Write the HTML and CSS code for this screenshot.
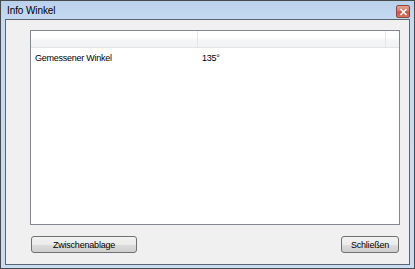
FILE: index.html
```html
<!DOCTYPE html>
<html>
<head>
<meta charset="utf-8">
<link rel="stylesheet" href="styles.css">
</head>
<body>
<div class="window">
  <div class="titlebar">
    <span class="title">Info Winkel</span>
    <div class="close"><svg width="9" height="8" viewBox="0 0 9 8"><path d="M1.5 1 L7.5 7 M7.5 1 L1.5 7" stroke="#fff" stroke-width="1.6"/></svg></div>
  </div>
  <div class="client">
    <div class="list">
      <div class="header">
        <div class="hcol c1"></div>
        <div class="hcol c2"></div>
        <div class="hcol fill"></div>
      </div>
      <div class="row">
        <div class="cell c1">Gemessener Winkel</div>
        <div class="cell c2">135°</div>
      </div>
    </div>
    <div class="buttons">
      <button class="btn wide">Zwischenablage</button>
      <button class="btn narrow">Schließen</button>
    </div>
  </div>
</div>
</body>
</html>
```

FILE: styles.css
```css
html, body {
  margin: 0;
  padding: 0;
  background: #ffffff;
}
body {
  font-family: "Liberation Sans", Arial, sans-serif;
}
.window {
  width: 415px;
  height: 269px;
  box-sizing: border-box;
  border: 1px solid #4a4a4a;
  background: linear-gradient(to bottom, #bad1ec 0px, #c6daf1 20px, #c9dcf2 100%);
  padding: 0 4px 3px 4px;
  display: flex;
  flex-direction: column;
}
.titlebar {
  height: 18px;
  display: flex;
  align-items: center;
  justify-content: space-between;
  flex: none;
}
.title {
  font-size: 10px;
  color: #000;
  padding-left: 2px;
  margin-top: 1px;
  letter-spacing: -0.1px;
}
.close {
  width: 14px;
  height: 13px;
  box-sizing: border-box;
  border: 1px solid #8a4a43;
  border-radius: 2px;
  background: linear-gradient(to bottom, #e4a493 0%, #d27a66 45%, #c4553f 55%, #d47560 100%);
  display: flex;
  align-items: center;
  justify-content: center;
  margin-top: 3px;
}
.client {
  flex: 1;
  border: 1px solid #5b6572;
  background: #f0f0f0;
  padding: 10px 9px 11px 24px;
  display: flex;
  flex-direction: column;
  gap: 11px;
}
.list {
  flex: 1;
  background: #fff;
  border: 1px solid #828790;
}
.header {
  display: flex;
  height: 16px;
  background: linear-gradient(to bottom, #ffffff 0%, #ffffff 40%, #f4f5f7 60%, #f2f3f5 100%);
  border-bottom: 1px solid #e3e4e6;
}
.hcol {
  height: 100%;
  box-sizing: border-box;
}
.hcol.c1 {
  width: 167px;
  border-right: 1px solid #e3e5e8;
}
.hcol.c2 {
  width: 188px;
  border-right: 1px solid #e3e5e8;
}
.hcol.fill {
  flex: 1;
}
.row {
  display: flex;
  height: 17px;
  align-items: center;
  margin-top: 1px;
  font-size: 9px;
  letter-spacing: -0.25px;
  color: #000;
}
.cell.c1 {
  width: 167px;
  padding-left: 4px;
  box-sizing: border-box;
}
.cell.c2 {
  padding-left: 4px;
}
.buttons {
  height: 17px;
  display: flex;
  justify-content: space-between;
  padding: 0 1px;
  flex: none;
}
.btn {
  height: 17px;
  box-sizing: border-box;
  border: 1px solid #707070;
  border-radius: 3px;
  background: linear-gradient(to bottom, #f2f2f2 0%, #ebebeb 50%, #dddddd 50%, #cfcfcf 100%);
  font-family: "Liberation Sans", Arial, sans-serif;
  font-size: 9px;
  letter-spacing: -0.2px;
  color: #000;
  padding: 0;
  margin: 0;
}
.btn.wide {
  width: 106px;
}
.btn.narrow {
  width: 58px;
}
```
